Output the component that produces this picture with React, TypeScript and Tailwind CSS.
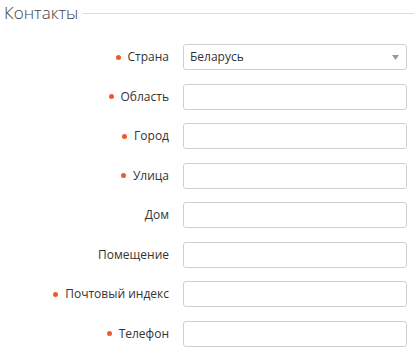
const fields = [
  { label: "Страна", required: true, select: "Беларусь" },
  { label: "Область", required: true },
  { label: "Город", required: true },
  { label: "Улица", required: true },
  { label: "Дом", required: false },
  { label: "Помещение", required: false },
  { label: "Почтовый индекс", required: true },
  { label: "Телефон", required: true },
];

export default function App() {
  return (
    <div className="w-[414px] h-[355px] bg-white overflow-hidden font-['Open_Sans',sans-serif]">
      <div className="flex items-center pl-[4px]">
        <h2 className="text-[17px] font-light text-[#444] leading-[26px]">Контакты</h2>
        <div className="flex-1 h-px bg-[#dcdcdc] ml-[5px] mt-[1px]" />
      </div>
      <div className="flex flex-col gap-[13.5px] mt-[18px]">
        {fields.map((f) => (
          <div key={f.label} className="flex items-center h-[26px]">
            <div className="w-[169px] flex items-center justify-end text-[12px] text-[#333]">
              {f.required && <span className="w-[5px] h-[5px] rounded-full bg-[#f05a28] mr-[7px]" />}
              <span>{f.label}</span>
            </div>
            <div className="ml-[14px] w-[224px] h-[26px] border border-[#cfcfcf] rounded-[3px] bg-white flex items-center px-[6px] text-[12px] text-[#333]">
              {f.select && (
                <>
                  <span className="flex-1">{f.select}</span>
                  <svg width="7" height="5" viewBox="0 0 7 5" className="mr-[1px]">
                    <path d="M0 0 H7 L3.5 5 Z" fill="#999" />
                  </svg>
                </>
              )}
            </div>
          </div>
        ))}
      </div>
    </div>
  );
}
